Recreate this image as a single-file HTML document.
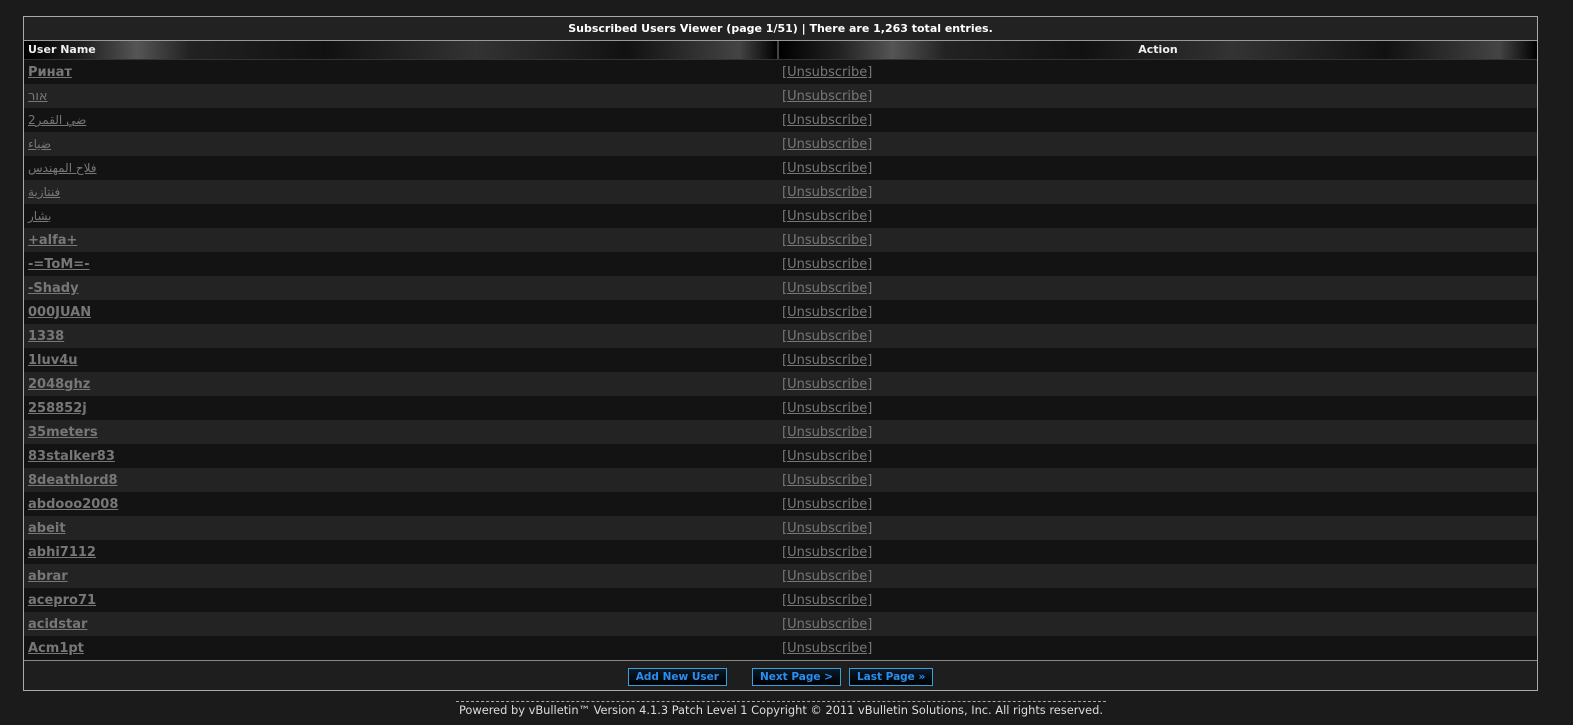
<!DOCTYPE html>
<html><head><meta charset="utf-8"><style>
body{margin:0;background:#1b1b1b;width:1573px;height:725px;overflow:hidden;font-family:Verdana,"DejaVu Sans","Liberation Sans","Noto Sans CJK SC",sans-serif;}
.wrap{position:absolute;left:23px;top:16px;width:1513px;border:1px solid #aaa;background:#222;}
.title{height:23px;line-height:23px;text-align:center;color:#fff;font-weight:bold;font-size:11px;border-bottom:1px solid #999;}
.hdr{display:flex;height:18px;line-height:18px;font-size:11px;font-weight:bold;color:#eee;border-bottom:1px solid #333;}
.hdr div{background:linear-gradient(90deg,#000 0%,#222 8%,#555 15%,#222 22%,#111 40%,#333 60%,#111 80%,#444 95%,#000 100%);}
.h1{width:755px;padding-left:4px;box-sizing:border-box;border-right:2px solid #444}
.h2{flex:1;text-align:center}
.row{display:flex;height:24px;line-height:25px;font-size:13px;}
.row:nth-child(odd){background:#131313}.row:nth-child(even){background:#232323}
.row .u{width:758px;padding-left:4px;box-sizing:border-box;}
.row .u a{color:#777;font-weight:bold;text-decoration:underline;}
.row .a a{color:#777;text-decoration:underline;font-family:"DejaVu Sans",sans-serif;font-size:13px;}
.bot{height:30px;border-top:1px solid #888;text-align:center;padding-top:4px;box-sizing:border-box;background:#1e1e1e}
.btn{display:inline-block;height:16px;line-height:16px;border:1px solid #3aa0d8;background:linear-gradient(#0a1a28,#000);color:#2a8ff0;font-size:10.5px;font-weight:bold;padding:0 7px;margin:0 8px;}
.foot{position:absolute;left:456px;top:701px;width:650px;border-top:1px dashed #aaa;text-align:center;color:#ddd;font-size:11.4px;font-family:"DejaVu Sans",sans-serif;padding-top:1px;white-space:nowrap;}
</style></head><body>
<div class="wrap">
<div class="title">Subscribed Users Viewer (page 1/51) | There are 1,263 total entries.</div>
<div class="hdr"><div class="h1">User Name</div><div class="h2">Action</div></div>
<div id="rows">
<div class="row"><div class="u"><a>Ринат</a></div><div class="a"><a>[Unsubscribe]</a></div></div>
<div class="row"><div class="u"><a style="font-weight:normal">אור</a></div><div class="a"><a>[Unsubscribe]</a></div></div>
<div class="row"><div class="u"><a style="font-weight:normal;font-size:12px">ضي القمر2</a></div><div class="a"><a>[Unsubscribe]</a></div></div>
<div class="row"><div class="u"><a style="font-weight:normal;font-size:12px">ضياء</a></div><div class="a"><a>[Unsubscribe]</a></div></div>
<div class="row"><div class="u"><a style="font-weight:normal;font-size:12px">فلاح المهندس</a></div><div class="a"><a>[Unsubscribe]</a></div></div>
<div class="row"><div class="u"><a style="font-weight:normal;font-size:12px">فنتازية</a></div><div class="a"><a>[Unsubscribe]</a></div></div>
<div class="row"><div class="u"><a style="font-weight:normal;font-size:12px">بشار</a></div><div class="a"><a>[Unsubscribe]</a></div></div>
<div class="row"><div class="u"><a>+alfa+</a></div><div class="a"><a>[Unsubscribe]</a></div></div>
<div class="row"><div class="u"><a>-=ToM=-</a></div><div class="a"><a>[Unsubscribe]</a></div></div>
<div class="row"><div class="u"><a>-Shady</a></div><div class="a"><a>[Unsubscribe]</a></div></div>
<div class="row"><div class="u"><a>000JUAN</a></div><div class="a"><a>[Unsubscribe]</a></div></div>
<div class="row"><div class="u"><a>1338</a></div><div class="a"><a>[Unsubscribe]</a></div></div>
<div class="row"><div class="u"><a>1luv4u</a></div><div class="a"><a>[Unsubscribe]</a></div></div>
<div class="row"><div class="u"><a>2048ghz</a></div><div class="a"><a>[Unsubscribe]</a></div></div>
<div class="row"><div class="u"><a>258852j</a></div><div class="a"><a>[Unsubscribe]</a></div></div>
<div class="row"><div class="u"><a>35meters</a></div><div class="a"><a>[Unsubscribe]</a></div></div>
<div class="row"><div class="u"><a>83stalker83</a></div><div class="a"><a>[Unsubscribe]</a></div></div>
<div class="row"><div class="u"><a>8deathlord8</a></div><div class="a"><a>[Unsubscribe]</a></div></div>
<div class="row"><div class="u"><a>abdooo2008</a></div><div class="a"><a>[Unsubscribe]</a></div></div>
<div class="row"><div class="u"><a>abeit</a></div><div class="a"><a>[Unsubscribe]</a></div></div>
<div class="row"><div class="u"><a>abhi7112</a></div><div class="a"><a>[Unsubscribe]</a></div></div>
<div class="row"><div class="u"><a>abrar</a></div><div class="a"><a>[Unsubscribe]</a></div></div>
<div class="row"><div class="u"><a>acepro71</a></div><div class="a"><a>[Unsubscribe]</a></div></div>
<div class="row"><div class="u"><a>acidstar</a></div><div class="a"><a>[Unsubscribe]</a></div></div>
<div class="row"><div class="u"><a>Acm1pt</a></div><div class="a"><a>[Unsubscribe]</a></div></div>
</div>
<div class="bot"><span class="btn">Add New User</span> <span class="btn" style="margin-left:12px">Next Page &gt;</span><span class="btn" style="margin-left:0">Last Page »</span></div>
</div>
<div class="foot">Powered by vBulletin™ Version 4.1.3 Patch Level 1 Copyright © 2011 vBulletin Solutions, Inc. All rights reserved.</div>
</body></html>
